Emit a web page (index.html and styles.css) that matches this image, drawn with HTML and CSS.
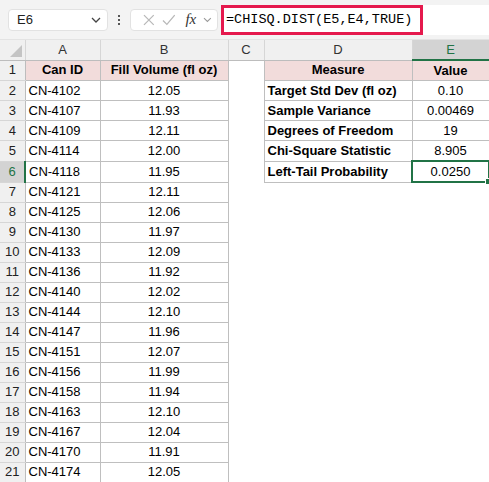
FILE: index.html
```html
<!DOCTYPE html>
<html lang="en">
<head>
  <meta charset="UTF-8" />
  <title>CHISQ.DIST</title>
  <link rel="stylesheet" href="styles.css">
</head>
<body>
  <div class="toolbar">
    <div class="namebox">
      <span>E6</span>
      <svg width="10" height="6" viewBox="0 0 10 6"><path d="M1 1 L5 5 L9 1" fill="none" stroke="#444" stroke-width="1.3"/></svg>
    </div>
    <div class="dots"><i></i><i></i><i></i></div>
    <div class="fxgroup">
      <svg width="12" height="12" viewBox="0 0 12 12"><path d="M1 1 L11 11 M11 1 L1 11" stroke="#b8b8b8" stroke-width="1.3"/></svg>
      <svg width="14" height="12" viewBox="0 0 14 12"><path d="M1 6.5 L5 10.5 L13 1" fill="none" stroke="#b8b8b8" stroke-width="1.3"/></svg>
      <span class="fx">fx</span>
      <svg width="9" height="6" viewBox="0 0 9 6"><path d="M1 1 L4.5 4.5 L8 1" fill="none" stroke="#999" stroke-width="1.1"/></svg>
    </div>
    <div class="formula">
      <span class="ftext">=CHISQ.DIST(E5,E4,TRUE)</span>
      <div class="highlight"></div>
    </div>
  </div>

  <table class="sheet">
    <colgroup>
      <col style="width:25px"><col style="width:75px"><col style="width:128px">
      <col style="width:36px"><col style="width:148px"><col style="width:77px">
    </colgroup>
    <thead>
      <tr>
        <th class="corner"><span class="tri"></span></th>
        <th>A</th><th>B</th><th>C</th><th>D</th><th class="active">E</th>
      </tr>
    </thead>
    <tbody id="rows"></tbody>
  </table>

  <script>
    const data = [
      ["CN-4102", "12.05"], ["CN-4107", "11.93"], ["CN-4109", "12.11"],
      ["CN-4114", "12.00"], ["CN-4118", "11.95"], ["CN-4121", "12.11"],
      ["CN-4125", "12.06"], ["CN-4130", "11.97"], ["CN-4133", "12.09"],
      ["CN-4136", "11.92"], ["CN-4140", "12.02"], ["CN-4144", "12.10"],
      ["CN-4147", "11.96"], ["CN-4151", "12.07"], ["CN-4156", "11.99"],
      ["CN-4158", "11.94"], ["CN-4163", "12.10"], ["CN-4167", "12.04"],
      ["CN-4170", "11.91"], ["CN-4174", "12.05"]
    ];
    const stats = [
      ["Target Std Dev (fl oz)", "0.10"],
      ["Sample Variance", "0.00469"],
      ["Degrees of Freedom", "19"],
      ["Chi-Square Statistic", "8.905"],
      ["Left-Tail Probability", "0.0250"]
    ];
    const tbody = document.getElementById("rows");
    let html = '<tr><td class="rh">1</td><td class="cell head">Can ID</td><td class="cell head">Fill Volume (fl oz)</td><td></td><td class="cell head">Measure</td><td class="cell head">Value</td></tr>';
    data.forEach((d, i) => {
      const r = i + 2;
      const s = stats[i];
      html += '<tr><td class="rh' + (r === 6 ? ' active' : '') + '">' + r + '</td>';
      html += '<td class="cell">' + d[0] + '</td><td class="cell num">' + d[1] + '</td><td></td>';
      if (s) {
        html += '<td class="cell bold">' + s[0] + '</td><td class="cell num' + (r === 6 ? ' sel' : '') + '">' + s[1] + '</td>';
      } else {
        html += '<td></td><td></td>';
      }
      html += '</tr>';
    });
    tbody.innerHTML = html;
  </script>
</body>
</html>
```

FILE: styles.css
```css
body {
  margin: 0;
  background: #fff;
  font-family: 'Liberation Sans', Arial, sans-serif;
  overflow: hidden;
}

.toolbar {
  height: 40px;
  background: #f3f3f3;
  display: flex;
  align-items: center;
  position: relative;
  border-bottom: 1px solid #e3e3e3;
  box-sizing: border-box;
}

.namebox {
  margin-left: 8px;
  width: 100px;
  height: 22px;
  box-sizing: border-box;
  background: #fff;
  border: 1px solid #e2e2e2;
  border-radius: 4px;
  display: flex;
  align-items: center;
  justify-content: space-between;
  padding: 0 6px 0 8px;
  font-size: 13px;
  color: #222;
}

.dots {
  width: 22px;
  display: flex;
  flex-direction: column;
  align-items: center;
  gap: 2px;
}

.dots i {
  width: 2px;
  height: 2px;
  background: #555;
  display: block;
}

.fxgroup {
  width: 88px;
  height: 22px;
  box-sizing: border-box;
  background: #fff;
  border: 1px solid #e2e2e2;
  border-radius: 4px;
  display: flex;
  align-items: center;
  padding: 0 5px 0 12px;
  gap: 7px;
}

.fx {
  font-family: 'Liberation Serif', serif;
  font-style: italic;
  font-size: 15px;
  color: #333;
  margin-left: 3px;
}

.formula {
  margin-left: 3px;
  flex: 1;
  height: 30px;
  background: #fff;
  display: flex;
  align-items: center;
  position: relative;
}

.ftext {
  font-family: 'Liberation Mono', monospace;
  font-size: 13.5px;
  color: #000;
  padding-left: 5px;
}

.highlight {
  position: absolute;
  left: 0;
  top: 0;
  width: 202px;
  height: 30px;
  box-sizing: border-box;
  border: 3px solid #e5194d;
}

.sheet {
  border-collapse: collapse;
  table-layout: fixed;
  width: 489px;
  font-size: 13px;
  color: #000;
}

.sheet th {
  height: 19px;
  padding: 0;
  background: #f0f0f0;
  font-weight: normal;
  color: #333;
  font-size: 13px;
  border-right: 1px solid #d6d6d6;
  border-bottom: 1px solid #bdbdbd;
}

.sheet th.active {
  background: #d3d3d3;
  color: #217346;
  border-bottom: 2px solid #217346;
}

.sheet th.corner {
  position: relative;
}

.tri {
  position: absolute;
  right: 3px;
  bottom: 3px;
  width: 0;
  height: 0;
  border-left: 12px solid transparent;
  border-bottom: 12px solid #c4c4c4;
}

.sheet td {
  height: 19px;
  padding: 0 3px;
  line-height: 18px;
  white-space: nowrap;
  overflow: hidden;
}

.sheet td.rh {
  background: #f0f0f0;
  text-align: center;
  color: #222;
  padding: 0;
  border-bottom: 1px solid #d6d6d6;
  border-right: 1px solid #bdbdbd;
}

.sheet td.rh.active {
  background: #d3d3d3;
  color: #217346;
  border-right: 2px solid #217346;
}

.sheet td.cell {
  border: 1px solid #bfbfbf;
}

.sheet td.head {
  background: #f2dcdb;
  font-weight: bold;
  text-align: center;
}

.sheet td.bold {
  font-weight: bold;
}

.sheet td.num {
  text-align: center;
}

.sheet td.sel {
  border: 2px solid #217346;
  position: relative;
  overflow: visible;
}

.sheet td.sel::after {
  content: "";
  position: absolute;
  right: -4px;
  bottom: -4px;
  width: 5px;
  height: 5px;
  background: #217346;
  border: 1px solid #fff;
}
```
